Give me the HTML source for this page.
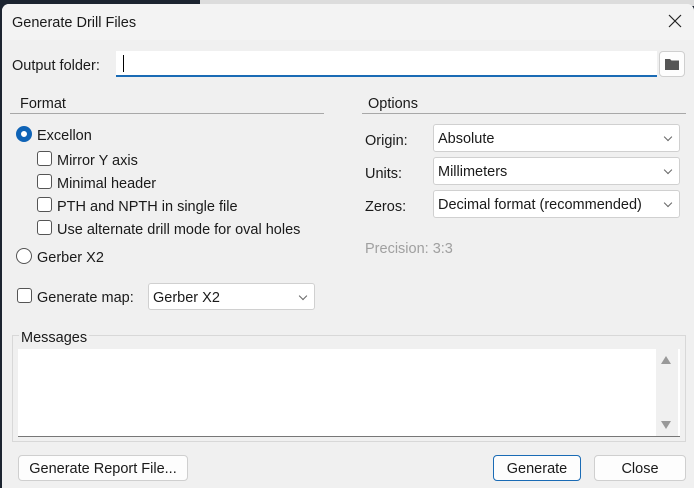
<!DOCTYPE html>
<html><head><style>
*{box-sizing:border-box;margin:0;padding:0}
body{width:694px;height:488px;background:#1c2430;position:relative;overflow:hidden;font-family:"Liberation Sans",sans-serif;font-size:14.5px;color:#1a1a1a}
.a{position:absolute}
.t{margin-top:2px}
#top{left:200px;top:0;width:494px;height:6px;background:#dcdcdc}
#dlg{left:2px;top:4px;width:692px;height:484px;background:#f0f0f0;border-radius:7px 7px 0 0;overflow:hidden}
#tb{left:0;top:0;width:692px;height:36px;background:#f3f3f3}
.cb{width:15px;height:15px;border:1px solid #555;border-radius:3px;background:#fff}
.rb{width:16px;height:16px;border-radius:50%;border:1px solid #555;background:#fff}
.combo{background:#fff;border:1px solid #d0d0d0;border-radius:3px;padding-left:4px;line-height:29px}
.combo:after{content:"";position:absolute;right:8px;top:9px;width:5px;height:5px;border-right:1px solid #666;border-bottom:1px solid #666;transform:rotate(45deg)}
.btn{background:#fdfdfd;border:1px solid #cfcfcf;border-radius:4px;text-align:center;line-height:27px}
.line{height:1px;background:#a8a8a8}
</style></head><body>
<div class="a" id="top"></div>
<div class="a" id="dlg">
<div class="a" id="tb"></div>
<div class="a t" style="left:10px;top:9px">Generate Drill Files</div>
<svg class="a" style="left:666px;top:10px" width="14" height="14"><path d="M1 1L13 13M13 1L1 13" stroke="#222" stroke-width="1.2"/></svg>
<div class="a t" style="left:10px;top:52px">Output folder:</div>
<div class="a" style="left:114px;top:47px;width:541px;height:26px;background:#fff;border-bottom:2px solid #1a6bb5"></div>
<div class="a" style="left:121px;top:51px;width:1px;height:17px;background:#000"></div>
<div class="a btn" style="left:657px;top:47px;width:26px;height:26px"></div>
<svg class="a" style="left:663px;top:54px" width="14" height="12"><path d="M0 1h5l1.5 1.5H14V12H0z" fill="#555"/></svg>
<div class="a t" style="left:18px;top:90px">Format</div>
<div class="a line" style="left:8px;top:109px;width:314px"></div>
<div class="a t" style="left:366px;top:90px">Options</div>
<div class="a line" style="left:360px;top:109px;width:324px"></div>
<div class="a rb" style="left:14px;top:122px;border:5px solid #0f63b6"></div>
<div class="a t" style="left:35px;top:122px">Excellon</div>
<div class="a cb" style="left:35px;top:147px"></div><div class="a t" style="left:55px;top:147px">Mirror Y axis</div>
<div class="a cb" style="left:35px;top:170px"></div><div class="a t" style="left:55px;top:170px">Minimal header</div>
<div class="a cb" style="left:35px;top:193px"></div><div class="a t" style="left:55px;top:193px">PTH and NPTH in single file</div>
<div class="a cb" style="left:35px;top:216px"></div><div class="a t" style="left:55px;top:216px">Use alternate drill mode for oval holes</div>
<div class="a rb" style="left:14px;top:244px"></div><div class="a t" style="left:35px;top:244px">Gerber X2</div>
<div class="a cb" style="left:15px;top:284px"></div><div class="a t" style="left:35px;top:284px">Generate map:</div>
<div class="a combo" style="left:146px;top:279px;width:167px;height:27px">Gerber X2</div>
<div class="a t" style="left:363px;top:127px">Origin:</div>
<div class="a combo" style="left:431px;top:120px;width:247px;height:28px">Absolute</div>
<div class="a t" style="left:363px;top:160px">Units:</div>
<div class="a combo" style="left:431px;top:153px;width:247px;height:28px">Millimeters</div>
<div class="a t" style="left:363px;top:193px">Zeros:</div>
<div class="a combo" style="left:431px;top:186px;width:247px;height:28px">Decimal format (recommended)</div>
<div class="a t" style="left:363px;top:235px;color:#a0a0a0">Precision: 3:3</div>
<div class="a" style="left:10px;top:331px;width:674px;height:107px;border:1px solid #d8d8d8"></div>
<div class="a t" style="left:17px;top:324px;background:#f0f0f0;padding:0 2px">Messages</div>
<div class="a" style="left:16px;top:345px;width:662px;height:88px;background:#fff;border-bottom:1px solid #777"></div>
<div class="a" style="left:654px;top:345px;width:22px;height:87px;background:#f0f0f0"></div>
<div class="a" style="left:659px;top:352px;width:0;height:0;border:5px solid transparent;border-bottom:8px solid #999;border-top:0"></div>
<div class="a" style="left:659px;top:417px;width:0;height:0;border:5px solid transparent;border-top:8px solid #999;border-bottom:0"></div>
<div class="a btn" style="left:16px;top:451px;width:170px;height:26px">Generate Report File...</div>
<div class="a btn" style="left:491px;top:451px;width:88px;height:26px;border-color:#1a6bb5">Generate</div>
<div class="a btn" style="left:592px;top:451px;width:92px;height:26px">Close</div>
</div>
</body></html>
